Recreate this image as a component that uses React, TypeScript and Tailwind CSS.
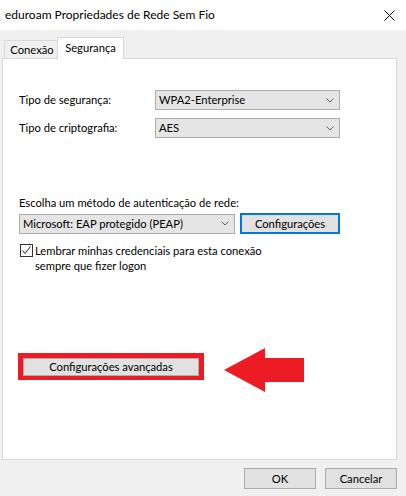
import React from "react";

function Chevron() {
  return (
    <svg width="8" height="5" viewBox="0 0 8 5" className="shrink-0">
      <polyline points="0.5,0.5 4,4 7.5,0.5" fill="none" stroke="#606060" strokeWidth="1" />
    </svg>
  );
}

function Dropdown({ text, w }: { text: string; w: string }) {
  return (
    <div className={`${w} h-[20px] bg-[#e5e5e5] border border-[#acacac] flex items-center justify-between pl-[3px] pr-[5px]`}>
      <span>{text}</span>
      <Chevron />
    </div>
  );
}

export default function App() {
  return (
    <div className="w-[406px] h-[496px] bg-[#f0f0f0] flex flex-col font-['Lato','Noto_Sans',sans-serif] text-[11.2px] leading-[16px] text-black overflow-hidden">
      {/* title bar */}
      <div className="h-[30px] bg-white flex items-center justify-between pl-[5px] pr-[11px] shrink-0 text-[12px]">
        <span>eduroam Propriedades de Rede Sem Fio</span>
        <svg width="11" height="11" viewBox="0 0 11 11">
          <line x1="0.5" y1="0.5" x2="10.5" y2="10.5" stroke="#000" strokeWidth="1" />
          <line x1="10.5" y1="0.5" x2="0.5" y2="10.5" stroke="#000" strokeWidth="1" />
        </svg>
      </div>

      <div className="flex flex-col pl-[2px] pr-[9px] pt-[7px]">
        {/* tabs */}
        <div className="flex items-end -mb-px relative z-10 pl-[2px]">
          <div className="w-[53px] h-[19px] border-t border-l border-b border-[#d9d9d9] bg-[#f0f0f0] flex items-center justify-center pl-[2px]">
            Conexão
          </div>
          <div className="w-[67px] h-[22px] border-t border-l border-r border-[#d9d9d9] bg-white flex items-start justify-center pt-[2px]">
            Segurança
          </div>
        </div>

        {/* panel */}
        <div className="h-[402px] border border-[#d9d9d9] bg-white flex flex-col pl-[16px] pt-[31px]">
          <div className="flex items-center h-[20px]">
            <span className="w-[136px]">Tipo de segurança:</span>
            <Dropdown text="WPA2-Enterprise" w="w-[185px]" />
          </div>
          <div className="flex items-center h-[20px] mt-[8px]">
            <span className="w-[136px]">Tipo de criptografia:</span>
            <Dropdown text="AES" w="w-[185px]" />
          </div>

          <div className="mt-[57px]">Escolha um método de autenticação de rede:</div>
          <div className="flex items-center mt-[2px] gap-[5px]">
            <Dropdown text="Microsoft: EAP protegido (PEAP)" w="w-[216px]" />
            <div className="w-[100px] h-[21px] border-2 border-[#0078d7] bg-[#e1e1e1] flex items-center justify-center">
              Configurações
            </div>
          </div>

          <div className="flex items-start mt-[9px] gap-[2px] pl-[1px]">
            <div className="w-[13px] h-[13px] border border-[#333333] bg-white mt-[1px] shrink-0 flex items-center justify-center">
              <svg width="11" height="11" viewBox="0 0 11 11">
                <polyline points="1.5,5.5 4,8.5 9.5,1.5" fill="none" stroke="#222" strokeWidth="1" />
              </svg>
            </div>
            <div className="leading-[15px]">
              Lembrar minhas credenciais para esta conexão
              <br />
              sempre que fizer logon
            </div>
          </div>

          <div className="flex items-start mt-[80px] -ml-[1px]">
            <div className="w-[186px] h-[27px] border-[5px] border-b-[4px] border-[#ed1c24] flex">
              <div className="flex-1 bg-[#e1e1e1] border border-[#adadad] flex items-center justify-center">
                Configurações avançadas
              </div>
            </div>
            <svg width="81" height="45" viewBox="0 0 81 45" className="-mt-[5px] ml-[20px]">
              <polygon points="0,22 41,0 41,10 80,10 80,34 41,34 41,44" fill="#ed1c24" />
            </svg>
          </div>
        </div>
      </div>

      {/* footer */}
      <div className="flex justify-end gap-[9px] pr-[9px] mt-[8px]">
        <div className="w-[72px] h-[21px] bg-[#e1e1e1] border border-[#adadad] flex items-center justify-center">OK</div>
        <div className="w-[72px] h-[21px] bg-[#e1e1e1] border border-[#adadad] flex items-center justify-center">Cancelar</div>
      </div>
    </div>
  );
}
